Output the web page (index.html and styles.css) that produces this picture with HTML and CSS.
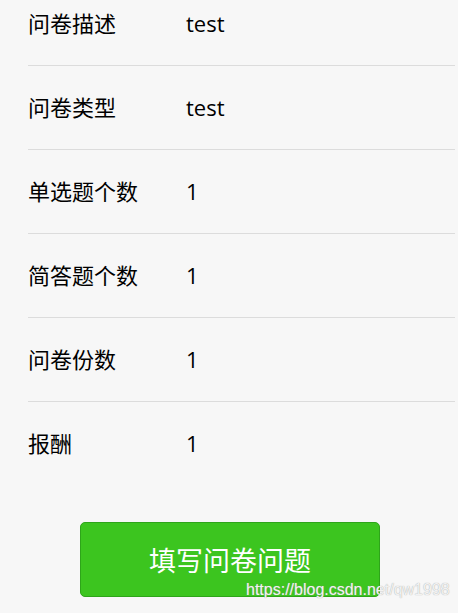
FILE: index.html
```html
<!DOCTYPE html>
<html lang="zh-CN">
<head>
    <meta charset="UTF-8">
    <title>问卷详情</title>
    <link rel="stylesheet" href="styles.css">
</head>
<body>
    <!-- Список параметров анкеты -->
    <div class="info-list">
        <div class="info-row">
            <span class="info-label">问卷描述</span>
            <span class="info-value">test</span>
        </div>
        <div class="info-row">
            <span class="info-label">问卷类型</span>
            <span class="info-value">test</span>
        </div>
        <div class="info-row">
            <span class="info-label">单选题个数</span>
            <span class="info-value">1</span>
        </div>
        <div class="info-row">
            <span class="info-label">简答题个数</span>
            <span class="info-value">1</span>
        </div>
        <div class="info-row">
            <span class="info-label">问卷份数</span>
            <span class="info-value">1</span>
        </div>
        <div class="info-row">
            <span class="info-label">报酬</span>
            <span class="info-value">1</span>
        </div>
    </div>

    <!-- Кнопка перехода к вопросам -->
    <div class="actions">
        <button class="primary-btn">填写问卷问题</button>
    </div>

    <!-- Водяной знак поверх скриншота -->
    <div class="watermark">https://blog.csdn.net/qw1998</div>
</body>
</html>
```

FILE: styles.css
```css
/* Страница */
body {
    margin: 0;
    min-height: 100vh;
    background: #f7f7f7;
    font-family: "Open Sans", "Noto Sans CJK SC", sans-serif;
    color: #000;
    position: relative;
    overflow: hidden;
}

/* Список (прокручен немного вверх) */
.info-list {
    margin-top: -18px;
    padding: 0 3px 0 28px;
}

.info-row {
    display: grid;
    grid-template-columns: 158px 1fr;
    align-items: center;
    padding: 26px 0;
    line-height: 31px;
    font-size: 22px;
    border-bottom: 1px solid #dcdcdc;
}

.info-row:last-child {
    border-bottom: none;
}

/* Блок с кнопкой */
.actions {
    margin-top: 37px;
    padding-left: 80px;
}

.primary-btn {
    width: 300px;
    height: 75px;
    background: #3cc51f;
    border: 1px solid #2ea51a;
    border-radius: 5px;
    color: #fff;
    font-family: "Noto Sans CJK SC", sans-serif;
    font-size: 27px;
    cursor: pointer;
}

/* Водяной знак */
.watermark {
    position: absolute;
    left: 246px;
    top: 580px;
    font-family: "Liberation Sans", sans-serif;
    font-size: 16px;
    line-height: 20px;
    color: #f2f2f2;
    text-shadow: 0 0 1px #9a9a9a;
}
```
